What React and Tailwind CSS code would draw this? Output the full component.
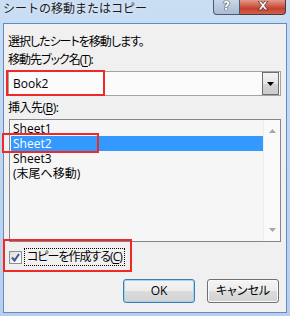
import React from 'react';

const sheets = ['Sheet1', 'Sheet2', 'Sheet3', '(末尾へ移動)'];

const TitleButtons = () => (
  <div className="ml-auto mr-[4px] flex h-[15px]">
    <div className="w-[27px] h-[15px] flex items-start justify-center border border-t-0 border-[#4a5a70] rounded-bl-[4px] bg-[linear-gradient(to_bottom,#c9d6e6,#a9bbd2)]">
      <span className="text-[12px] leading-[12px] font-bold text-white font-['DejaVu_Sans',sans-serif] [text-shadow:0_0_1px_#33445a,0_0_1px_#33445a,0_0_1px_#33445a]">?</span>
    </div>
    <div className="w-[46px] h-[15px] flex items-start justify-center border border-t-0 border-l-0 border-[#4a3a3a] rounded-br-[4px] bg-[linear-gradient(to_bottom,#e59a8c,#c5412f_60%,#d0604c)]">
      <svg width="12" height="10" viewBox="0 0 12 10" className="mt-px">
        <path d="M1 0 L4 0 L6 2.5 L8 0 L11 0 L7.5 4.5 L11 9 L8 9 L6 6.5 L4 9 L1 9 L4.5 4.5 Z" fill="#ffffff" stroke="#4a2a26" strokeWidth="0.8" />
      </svg>
    </div>
  </div>
);

const Combo = () => (
  <div className="mt-[2px] h-[25px] w-[273px] flex items-center border border-[#a3a3a3] bg-[#fbfbfb]">
    <span className="pl-[4px] leading-[16px]">Book2</span>
    <div className="ml-auto mr-px h-[23px] w-[17px] flex items-center justify-center border border-[#6f6f6f] bg-[linear-gradient(to_bottom,#f4f4f4,#e6e6e6_50%,#d4d4d4_50%,#cbcbcb)]">
      <svg width="7" height="4" viewBox="0 0 7 4">
        <path d="M0 0 H7 L3.5 4 Z" fill="#000000" />
      </svg>
    </div>
  </div>
);

const ListBox = () => (
  <div className="mt-[2px] ml-px h-[123px] w-[272px] flex border border-[#82878f] bg-[#f6f6f6]">
    <div className="flex-1 pt-px pl-px">
      {sheets.map((s) => (
        <div
          key={s}
          className={`h-[15px] leading-[15px] pl-[2px] ${s === 'Sheet2' ? 'bg-[#3399ff] text-white' : ''}`}
        >
          {s}
        </div>
      ))}
    </div>
    <div className="w-[17px] flex flex-col items-center justify-between py-[9px] bg-[#f9f9f9] border-l border-[#ececec]">
      <svg width="7" height="4" viewBox="0 0 7 4">
        <path d="M0 4 H7 L3.5 0 Z" fill="#a6a6a6" />
      </svg>
      <svg width="7" height="4" viewBox="0 0 7 4">
        <path d="M0 0 H7 L3.5 4 Z" fill="#a6a6a6" />
      </svg>
    </div>
  </div>
);

const CheckRow = () => (
  <div className="mt-[6px] ml-px h-[18px] flex items-center">
    <div className="w-[13px] h-[13px] flex items-center justify-center border border-[#8e8f8f] bg-[linear-gradient(to_bottom_right,#dcdcdc,#ffffff)]">
      <svg width="9" height="9" viewBox="0 0 9 9">
        <path d="M1 4.5 L3.5 7.5 L8 1" fill="none" stroke="#3a5597" strokeWidth="2" />
      </svg>
    </div>
    <div className="ml-[2px] h-[18px] px-[2px] flex items-center border border-dotted border-black">
      <span className="leading-[16px] tracking-[-1px]">コピーを作成する(<span className="underline underline-offset-2">C</span>)</span>
    </div>
  </div>
);

const Buttons = () => (
  <div className="mt-[13px] mr-[3px] flex justify-end gap-[12px]">
    <button className="w-[72px] h-[24px] rounded-[3px] border border-[#3c7fb1] shadow-[inset_0_0_0_1px_#9fd5f3] bg-[linear-gradient(to_bottom,#f4f4f4,#ececec_50%,#dcdcdc_50%,#d2d2d2)] leading-[16px]">
      OK
    </button>
    <button className="w-[72px] h-[24px] rounded-[3px] border border-[#707070] shadow-[inset_0_0_0_1px_#fbfbfb] bg-[linear-gradient(to_bottom,#f4f4f4,#ececec_50%,#dcdcdc_50%,#d2d2d2)] leading-[16px]">
      キャンセル
    </button>
  </div>
);

export default function App() {
  return (
    <div className="relative w-[290px] h-[316px] overflow-hidden bg-[linear-gradient(to_bottom,#c9ddf3,#b7cfea)] font-['Open_Sans','Noto_Sans_CJK_JP',sans-serif] text-[12px] text-black [font-feature-settings:'palt']">
      {/* title bar */}
      <div className="h-[23px] flex items-start">
        <span className="pl-[3px] text-[12px] leading-[18px] text-[#1a1a1a] [font-feature-settings:normal] [text-shadow:0_0_4px_#eaf2fb]">
          シートの移動またはコピー
        </span>
        <TitleButtons />
      </div>

      {/* client area */}
      <div className="mx-[3px] h-[290px] flex flex-col pl-[4px] pr-[4px] pt-[9px] border border-[#5f8bc8] bg-[#f0f0f0]">
        <div className="leading-[18px] tracking-[-1px]">選択したシートを移動します。</div>
        <div className="leading-[18px] tracking-[-1px]">
          移動先ブック名(<span className="underline underline-offset-2">T</span>):
        </div>
        <Combo />
        <div className="mt-[3px] leading-[18px] tracking-[-0.5px]">
          挿入先(<span className="underline underline-offset-2">B</span>):
        </div>
        <ListBox />
        <CheckRow />
        <Buttons />
      </div>

      {/* red annotation boxes */}
      <div className="absolute left-[6px] top-[70px] w-[99px] h-[26px] border-2 border-[#f02828]" />
      <div className="absolute left-[2px] top-[133px] w-[97px] h-[20px] border-2 border-[#f02828]" />
      <div className="absolute left-[3px] top-[239px] w-[129px] h-[33px] border-2 border-[#f02828]" />
    </div>
  );
}
